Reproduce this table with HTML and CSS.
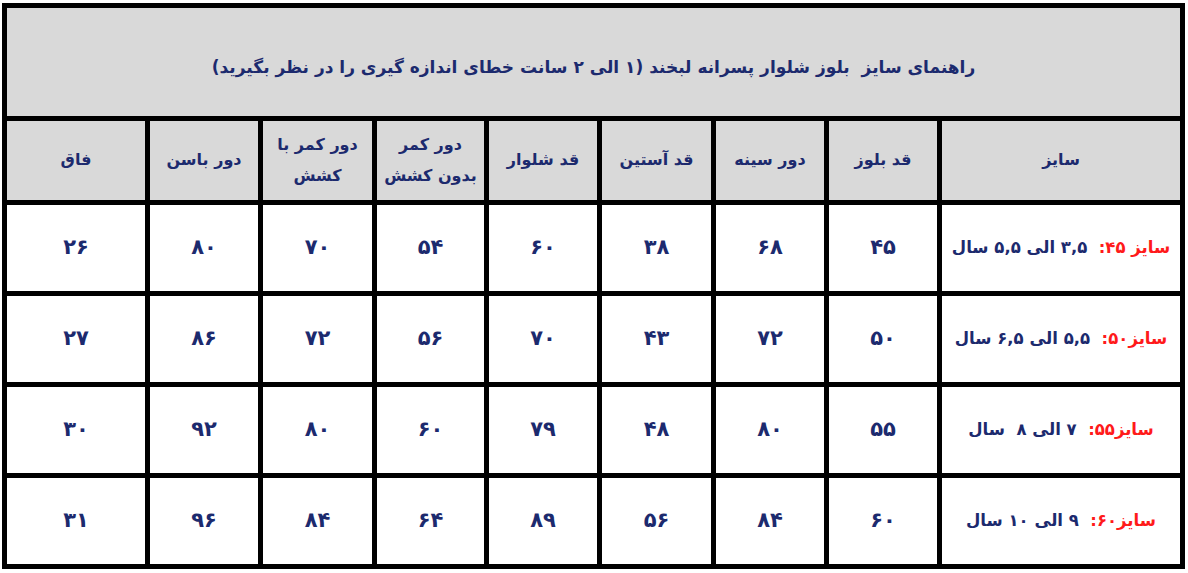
FILE: index.html
```html
<!DOCTYPE html>
<html lang="fa" dir="rtl">
<head>
<meta charset="utf-8">
<title>راهنمای سایز</title>
<link rel="stylesheet" href="styles.css">
</head>
<body>
<div class="chart">
  <div class="title">راهنمای سایز&nbsp; بلوز شلوار پسرانه لبخند (۱ الی ۲ سانت خطای اندازه گیری را در نظر بگیرید)</div>

  <div class="cell head">سایز</div>
  <div class="cell head">قد بلوز</div>
  <div class="cell head">دور سینه</div>
  <div class="cell head">قد آستین</div>
  <div class="cell head">قد شلوار</div>
  <div class="cell head">دور کمر<br>بدون کشش</div>
  <div class="cell head">دور کمر با<br>کشش</div>
  <div class="cell head">دور باسن</div>
  <div class="cell head">فاق</div>

  <div class="cell size"><span class="red">سایز ۴۵:</span>&nbsp; ۳,۵ الی ۵,۵ سال</div>
  <div class="cell">۴۵</div>
  <div class="cell">۶۸</div>
  <div class="cell">۳۸</div>
  <div class="cell">۶۰</div>
  <div class="cell">۵۴</div>
  <div class="cell">۷۰</div>
  <div class="cell">۸۰</div>
  <div class="cell">۲۶</div>

  <div class="cell size"><span class="red">سایز۵۰:</span>&nbsp; ۵,۵ الی ۶,۵ سال</div>
  <div class="cell">۵۰</div>
  <div class="cell">۷۲</div>
  <div class="cell">۴۳</div>
  <div class="cell">۷۰</div>
  <div class="cell">۵۶</div>
  <div class="cell">۷۲</div>
  <div class="cell">۸۶</div>
  <div class="cell">۲۷</div>

  <div class="cell size"><span class="red">سایز۵۵:</span>&nbsp; ۷ الی ۸&nbsp; سال</div>
  <div class="cell">۵۵</div>
  <div class="cell">۸۰</div>
  <div class="cell">۴۸</div>
  <div class="cell">۷۹</div>
  <div class="cell">۶۰</div>
  <div class="cell">۸۰</div>
  <div class="cell">۹۲</div>
  <div class="cell">۳۰</div>

  <div class="cell size"><span class="red">سایز۶۰:</span>&nbsp; ۹ الی ۱۰ سال</div>
  <div class="cell">۶۰</div>
  <div class="cell">۸۴</div>
  <div class="cell">۵۶</div>
  <div class="cell">۸۹</div>
  <div class="cell">۶۴</div>
  <div class="cell">۸۴</div>
  <div class="cell">۹۶</div>
  <div class="cell">۳۱</div>
</div>
</body>
</html>
```
FILE: styles.css
```css
html, body {
  margin: 0;
  padding: 0;
  background: #ffffff;
}

body {
  padding: 3px 0 0 2px;
  direction: ltr;
}

.chart {
  direction: rtl;
  width: 1183px;
  height: 566px;
  box-sizing: border-box;
  border: 5px solid #000;
  background: #000;
  display: grid;
  grid-template-columns: 238px 108px 108px 109px 108px 107px 109px 108px 138px;
  grid-template-rows: 108px 79px 86px 86px 86px 86px;
  gap: 5px;
  font-family: "DejaVu Sans", sans-serif;
  font-weight: bold;
  color: #1c2a6e;
}

.title {
  grid-column: 1 / -1;
  background: #d9d9d9;
  display: flex;
  align-items: center;
  justify-content: center;
  font-size: 17px;
  padding-top: 10px;
  box-sizing: border-box;
}

.cell {
  background: #fff;
  display: flex;
  align-items: center;
  justify-content: center;
  text-align: center;
  font-size: 21px;
  line-height: 1.5;
}

.cell.head {
  background: #d9d9d9;
  font-size: 16px;
  line-height: 1.9;
}

.cell.size {
  font-size: 16.5px;
  white-space: nowrap;
}

.red {
  color: #ff1a1a;
}
```
